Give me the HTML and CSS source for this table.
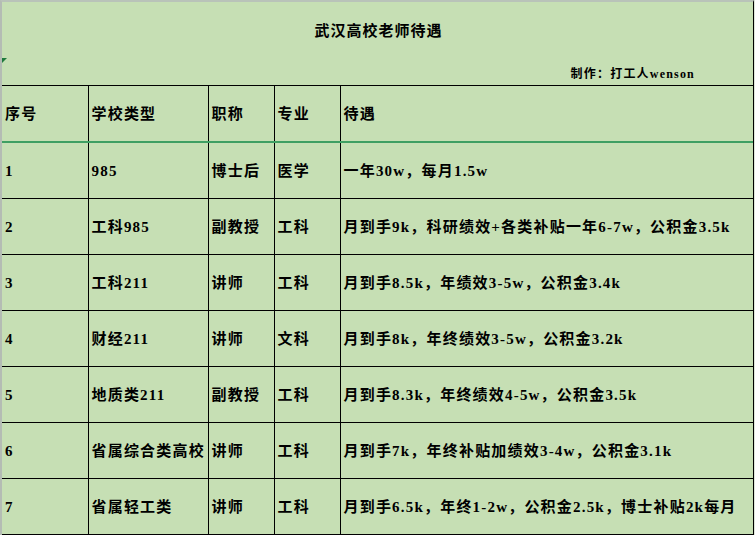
FILE: index.html
```html
<!DOCTYPE html>
<html lang="zh">
<head>
<meta charset="utf-8">
<title>武汉高校老师待遇</title>
<link rel="stylesheet" href="styles.css">
</head>
<body>
<div class="sheet">
  <div class="head">
    <span class="marker"></span>
    <div class="title">武汉高校老师待遇</div>
    <div class="credit">制作：打工人wenson</div>
  </div>
  <table class="grid">
    <colgroup>
      <col class="c1"><col class="c2"><col class="c3"><col class="c4"><col class="c5">
    </colgroup>
    <thead>
      <tr><th>序号</th><th>学校类型</th><th>职称</th><th>专业</th><th>待遇</th></tr>
    </thead>
    <tbody>
      <tr><td>1</td><td>985</td><td>博士后</td><td>医学</td><td>一年30w，每月1.5w</td></tr>
      <tr><td>2</td><td>工科985</td><td>副教授</td><td>工科</td><td>月到手9k，科研绩效+各类补贴一年6-7w，公积金3.5k</td></tr>
      <tr><td>3</td><td>工科211</td><td>讲师</td><td>工科</td><td>月到手8.5k，年绩效3-5w，公积金3.4k</td></tr>
      <tr><td>4</td><td>财经211</td><td>讲师</td><td>文科</td><td>月到手8k，年终绩效3-5w，公积金3.2k</td></tr>
      <tr><td>5</td><td>地质类211</td><td>副教授</td><td>工科</td><td>月到手8.3k，年终绩效4-5w，公积金3.5k</td></tr>
      <tr><td>6</td><td>省属综合类高校</td><td>讲师</td><td>工科</td><td>月到手7k，年终补贴加绩效3-4w，公积金3.1k</td></tr>
      <tr><td>7</td><td>省属轻工类</td><td>讲师</td><td>工科</td><td>月到手6.5k，年终1-2w，公积金2.5k，博士补贴2k每月</td></tr>
    </tbody>
  </table>
</div>
</body>
</html>
```

FILE: styles.css
```css
html, body {
  margin: 0;
  padding: 0;
  background: #dfe8da;
}
body {
  width: 755px;
  height: 535px;
  overflow: hidden;
  font-family: "Liberation Serif", "Noto Sans CJK SC", serif;
  font-weight: 700;
  color: #000;
}
.sheet {
  width: 751px;
  height: 533px;
  background: #c6dfb4;
  border-top: 2px solid #b9c3b9;
  border-left: 2px solid #b4bcb4;
  border-right: 1px solid #000;
  display: flex;
  flex-direction: column;
}
.head {
  position: relative;
  height: 84px;
  display: flex;
  flex-direction: column;
}
.marker {
  position: absolute;
  left: 0;
  top: 56px;
  width: 0;
  height: 0;
  border-top: 5px solid #1e7a3c;
  border-right: 5px solid transparent;
}
.title {
  font-size: 15px;
  letter-spacing: 1px;
  text-align: center;
  line-height: 20px;
  margin-top: 19px;
  padding-left: 2px;
}
.credit {
  font-size: 12px;
  letter-spacing: 1.2px;
  line-height: 16px;
  align-self: flex-end;
  margin-top: 25px;
  margin-right: 58px;
}
.grid {
  border-collapse: collapse;
  table-layout: fixed;
  width: 751px;
  font-size: 15px;
  letter-spacing: 1.2px;
}
.c1 { width: 86px; }
.c2 { width: 120px; }
.c3 { width: 66px; }
.c4 { width: 66px; }
.c5 { width: auto; }
.grid th, .grid td {
  height: 55px;
  padding: 0 0 0 3px;
  text-align: left;
  vertical-align: middle;
  font-weight: 700;
  white-space: nowrap;
  border: 1px solid #000;
  line-height: 20px;
}
.grid th:first-child, .grid td:first-child {
  border-left: none;
}
.grid th:last-child, .grid td:last-child {
  border-right: none;
}
.grid thead th {
  border-bottom: 2px solid #3f9f63;
}
.grid tbody tr:first-child td {
  border-top: 2px solid #3f9f63;
}
.grid tbody tr:last-child td {
  border-bottom: 1px solid #000;
}
```
